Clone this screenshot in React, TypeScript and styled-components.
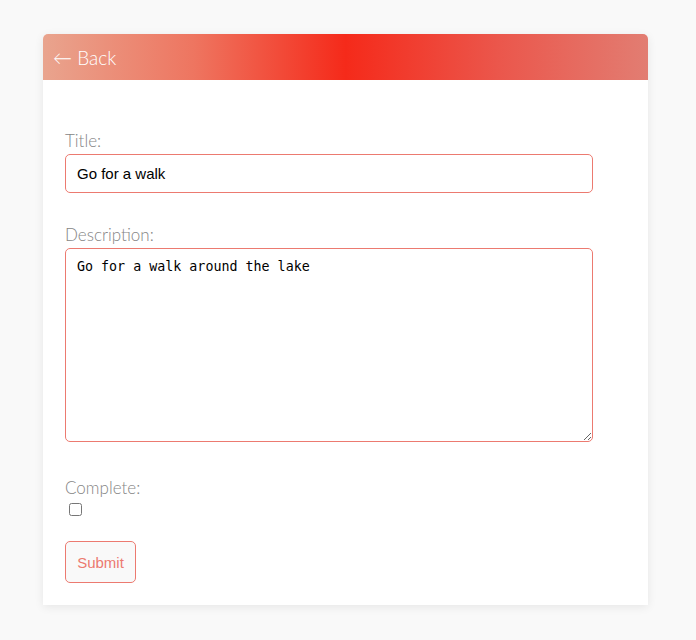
import styled, { createGlobalStyle } from 'styled-components';

const GlobalStyle = createGlobalStyle`
  body {
    margin: 0;
    background-color: #f9f9f9;
    font-family: Lato, "Liberation Sans", sans-serif;
  }
`;

const Page = styled.div`
  padding: 34px 48px 35px 43px;
  min-height: 640px;
  box-sizing: border-box;
`;

const Card = styled.div`
  width: 605px;
  background-color: #fff;
  border-radius: 5px 5px 0 0;
  box-shadow: 0 2px 10px rgba(0, 0, 0, 0.08);
  overflow: hidden;
`;

const Header = styled.div`
  height: 46px;
  display: flex;
  align-items: center;
  padding-left: 10px;
  background: linear-gradient(
    90deg,
    #e9a48e 0%,
    #ee7560 25%,
    #f52a1a 50%,
    #eb564b 75%,
    #e27d72 100%
  );
`;

const BackLink = styled.a`
  color: #fff;
  font-family: Lato, "Liberation Sans", sans-serif;
  font-weight: 300;
  font-size: 19px;
  text-decoration: none;
  cursor: pointer;
`;

const Form = styled.form`
  padding: 51px 22px 22px;
  display: flex;
  flex-direction: column;
  align-items: flex-start;
`;

const Label = styled.label`
  display: block;
  color: #858585;
  font-weight: 300;
  font-size: 17px;
  line-height: 20px;
  margin-bottom: 3px;
`;

const Field = styled.div<{ $gap: number }>`
  margin-bottom: ${({ $gap }) => $gap}px;
`;

const TextInput = styled.input`
  width: 528px;
  height: 39px;
  box-sizing: border-box;
  padding: 0 11px;
  border: 1px solid #ec7a70;
  border-radius: 5px;
  font-family: Arial, "Liberation Sans", sans-serif;
  font-size: 15px;
  color: #000;
  outline: none;
`;

const TextArea = styled.textarea`
  display: block;
  width: 528px;
  height: 194px;
  box-sizing: border-box;
  padding: 10px 11px;
  border: 1px solid #ec7a70;
  border-radius: 5px;
  font-family: "DejaVu Sans Mono", "Liberation Mono", monospace;
  font-size: 13.333px;
  color: #000;
  outline: none;
`;

const Checkbox = styled.input`
  width: 13px;
  height: 13px;
  margin: 5px 0 0 4px;
  display: block;
`;

const SubmitButton = styled.button`
  height: 42px;
  width: 71px;
  padding: 0;
  border: 1px solid #ec7a70;
  border-radius: 5px;
  background-color: #f9f9f9;
  color: #ec7a70;
  font-family: Arial, "Liberation Sans", sans-serif;
  font-size: 15px;
  cursor: pointer;
`;

export default function App() {
  return (
    <>
      <GlobalStyle />
      <Page>
        <Card>
          <Header>
            <BackLink>← Back</BackLink>
          </Header>
          <Form onSubmit={e => e.preventDefault()}>
            <Field $gap={32}>
              <Label htmlFor="title">Title:</Label>
              <TextInput id="title" type="text" defaultValue="Go for a walk" />
            </Field>
            <Field $gap={36}>
              <Label htmlFor="description">Description:</Label>
              <TextArea id="description" defaultValue="Go for a walk around the lake" />
            </Field>
            <Field $gap={25}>
              <Label htmlFor="complete">Complete:</Label>
              <Checkbox id="complete" type="checkbox" />
            </Field>
            <SubmitButton type="submit">Submit</SubmitButton>
          </Form>
        </Card>
      </Page>
    </>
  );
}
